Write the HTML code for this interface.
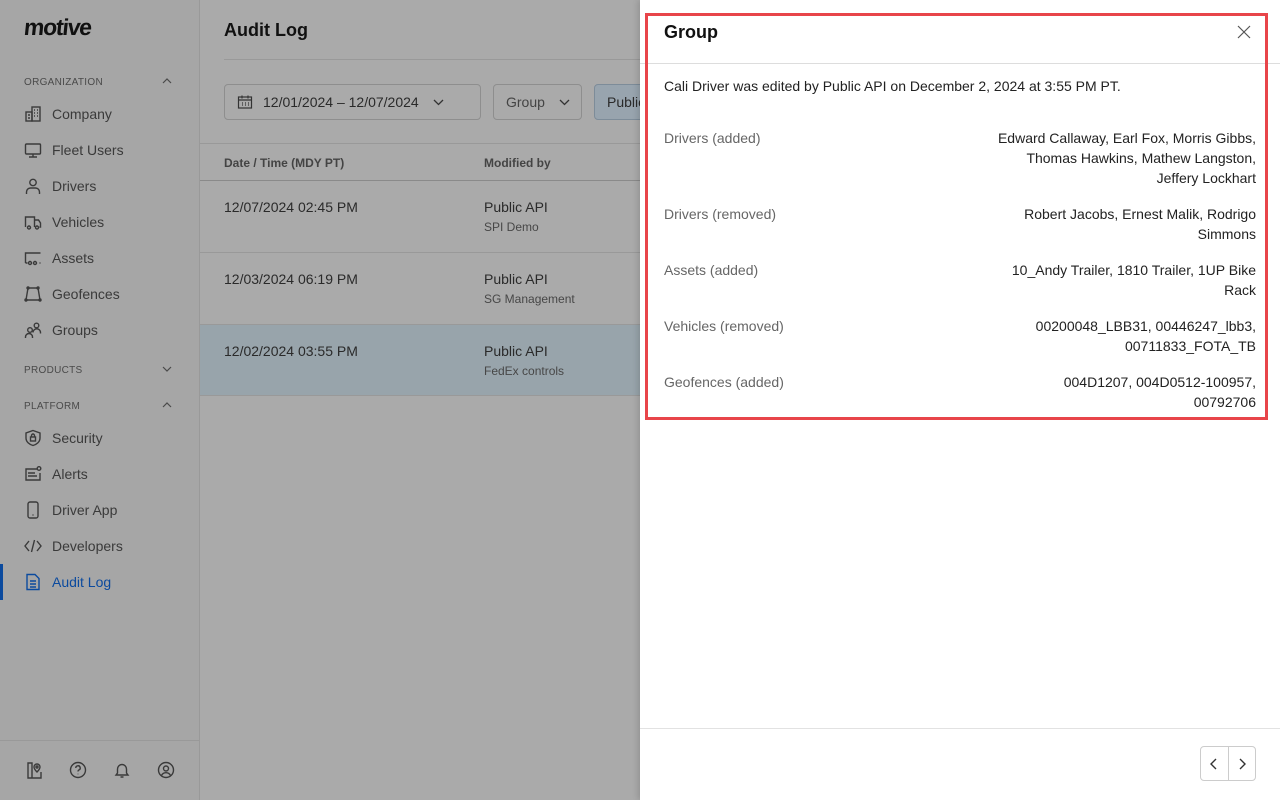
<!DOCTYPE html>
<html><head><style>
*{box-sizing:border-box;margin:0;padding:0}
body{width:1280px;height:800px;overflow:hidden;font-family:"Liberation Sans",Arial,sans-serif;background:#aaa;position:relative}
.side{position:absolute;left:0;top:0;width:200px;height:800px;background:#a6a6a6;border-right:1px solid #999}
.logo{position:absolute;left:24px;top:14px;font-size:23px;font-weight:900;color:#111;letter-spacing:-1.2px;transform:skewX(-6deg)}
.sec{position:absolute;left:24px;font-size:10px;color:#4a4a4a;letter-spacing:.3px;width:150px}
.sec svg{position:absolute;right:2px;top:1px;width:10px;height:6px;fill:none;stroke:#4a4a4a;stroke-width:1.2}
.item{position:absolute;left:24px;font-size:14px;color:#3a3a3a;display:flex;align-items:center;gap:10px}
.item svg{width:18px;height:18px;fill:none;stroke:#3a3a3a;stroke-width:1.4}
.active{color:#0b4a9e}.active svg{stroke:#0b4a9e}
.bar{position:absolute;left:0;top:564px;width:3px;height:36px;background:#0b4a9e}
.bot{position:absolute;left:0;top:740px;width:199px;border-top:1px solid #999}
.bi{position:absolute;top:761px;width:18px;height:18px;fill:none;stroke:#3a3a3a;stroke-width:1.4}
.main{position:absolute;left:200px;top:0;width:440px;height:800px}
h1{position:absolute;left:24px;top:20px;font-size:18px;color:#111}
.hl{position:absolute;left:24px;right:0;top:59px;border-top:1px solid #999}
.btn{position:absolute;top:84px;height:36px;border:1px solid #8e8e8e;border-radius:4px;font-size:14px;color:#2a2a2a;display:flex;align-items:center;padding-left:12px}
.chev{width:11px;height:7px;fill:none;stroke:#333;stroke-width:1.3}
.th{position:absolute;top:143px;left:0;right:0;height:38px;border-top:1px solid #999;border-bottom:1px solid #8a8a8a;font-size:12px;font-weight:bold;color:#444}
.row{position:absolute;left:0;right:0;height:72px;border-bottom:1px solid #999;font-size:14px;color:#2a2a2a}
.row .d{position:absolute;left:24px;top:18px}
.row .m{position:absolute;left:284px;top:18px}
.row .s{position:absolute;left:284px;top:39px;font-size:12px;color:#474747}
.panel{position:absolute;left:640px;top:0;width:640px;height:800px;background:#fff;box-shadow:-2px 0 6px rgba(0,0,0,.15)}
.red{position:absolute;left:5px;top:13px;width:623px;height:407px;border:3px solid #e8454a}
.ph{position:absolute;left:24px;top:22px;font-size:18px;font-weight:bold;color:#111}
.pl{position:absolute;left:0;right:0;top:63px;border-top:1px solid #ddd}
.intro{position:absolute;left:24px;top:78px;font-size:14px;color:#222}
.k{position:absolute;left:24px;font-size:14px;color:#666}
.v{position:absolute;right:24px;font-size:14px;color:#222;text-align:right;line-height:20px}
.fl{position:absolute;left:0;right:0;top:728px;border-top:1px solid #e2e2e2}
.pg{position:absolute;left:560px;top:746px;width:56px;height:35px;border:1px solid #ccc;border-radius:4px;display:flex}
.pg div{flex:1;display:flex;align-items:center;justify-content:center}
.pg div:first-child{border-right:1px solid #ccc}
</style></head><body>
<div class="side">
<div class="logo">motive</div>
<div class="sec" style="top:77px">ORGANIZATION<svg viewBox="0 0 10 6"><path d="M1 5l4-4 4 4"/></svg></div>
<div class="item" style="top:105px"><svg viewBox="0 0 18 18"><rect x="2" y="7" width="6" height="9"/><rect x="8" y="2" width="8" height="14"/><path d="M10 5h1M13 5h1M10 8h1M13 8h1M10 11h1M13 11h1M4 10h2M4 13h2"/></svg>Company</div>
<div class="item" style="top:141px"><svg viewBox="0 0 18 18"><rect x="1.5" y="3" width="15" height="10" rx="1"/><path d="M9 13v3M5 16h8"/></svg>Fleet Users</div>
<div class="item" style="top:177px"><svg viewBox="0 0 18 18"><circle cx="9" cy="5.5" r="3.2"/><path d="M2.5 17v-2a4 4 0 0 1 4-4h5a4 4 0 0 1 4 4v2"/></svg>Drivers</div>
<div class="item" style="top:213px"><svg viewBox="0 0 18 18"><path d="M1.5 14V4h9v10M10.5 7h4l2 3v4h-1"/><circle cx="5" cy="14.5" r="1.5"/><circle cx="13" cy="14.5" r="1.5"/></svg>Vehicles</div>
<div class="item" style="top:249px"><svg viewBox="0 0 18 18"><path d="M1.5 14V4h15M1.5 14h2M16.5 14h-1"/><circle cx="6" cy="14" r="1.5"/><circle cx="11" cy="14" r="1.5"/></svg>Assets</div>
<div class="item" style="top:285px"><svg viewBox="0 0 18 18"><path d="M4 3h10l2 12H2z"/><circle cx="4" cy="3" r="1"/><circle cx="14" cy="3" r="1"/><circle cx="2" cy="15" r="1"/><circle cx="16" cy="15" r="1"/></svg>Geofences</div>
<div class="item" style="top:321px"><svg viewBox="0 0 18 18"><circle cx="6" cy="9" r="2.3"/><circle cx="12.5" cy="4.5" r="2.3"/><path d="M1.5 17v-1a3.5 3.5 0 0 1 7 0v1M9 11.5a3.5 3.5 0 0 1 7.5 0v1"/></svg>Groups</div>
<div class="sec" style="top:365px">PRODUCTS<svg viewBox="0 0 10 6"><path d="M1 1l4 4 4-4"/></svg></div>
<div class="sec" style="top:401px">PLATFORM<svg viewBox="0 0 10 6"><path d="M1 5l4-4 4 4"/></svg></div>
<div class="item" style="top:429px"><svg viewBox="0 0 18 18"><path d="M9 1.5l7 2.5v5c0 4-3.5 6.5-7 7.5-3.5-1-7-3.5-7-7.5V4z"/><rect x="6.5" y="8" width="5" height="4"/><path d="M7.5 8V6.5a1.5 1.5 0 0 1 3 0V8"/></svg>Security</div>
<div class="item" style="top:465px"><svg viewBox="0 0 18 18"><path d="M13 4H2v11h14V8"/><circle cx="15" cy="3.5" r="1.8"/><path d="M4 8h7M4 11h9"/></svg>Alerts</div>
<div class="item" style="top:501px"><svg viewBox="0 0 18 18"><rect x="4" y="1" width="10" height="16" rx="2"/><path d="M8.5 14h1"/></svg>Driver App</div>
<div class="item" style="top:537px"><svg viewBox="0 0 18 18"><path d="M5 4L1 9l4 5M13 4l4 5-4 5M10.5 3l-3 12"/></svg>Developers</div>
<div class="item active" style="top:573px"><svg viewBox="0 0 18 18"><path d="M3 1.5h8l4 4v11H3z"/><path d="M6 8h6M6 11h6M6 14h6"/></svg>Audit Log</div>
<div class="bar"></div>
<div class="bot"></div>
<svg class="bi" style="left:25px" viewBox="0 0 18 18"><path d="M3 2h4v15H3zM7 17h9v-6"/><path d="M12 11s-3-3-3-5a3 3 0 0 1 6 0c0 2-3 5-3 5z"/><circle cx="12" cy="6" r="1"/></svg>
<svg class="bi" style="left:69px" viewBox="0 0 18 18"><circle cx="9" cy="9" r="7.5"/><path d="M6.8 7a2.2 2.2 0 1 1 3 2c-.6.3-.8.7-.8 1.5M9 12.8v.4"/></svg>
<svg class="bi" style="left:113px" viewBox="0 0 18 18"><path d="M3 14h12l-1.5-2V8a4.5 4.5 0 0 0-9 0v4zM7.5 16h3"/></svg>
<svg class="bi" style="left:157px" viewBox="0 0 18 18"><circle cx="9" cy="9" r="7.5"/><circle cx="9" cy="7.5" r="2.5"/><path d="M4.5 14.5a5 5 0 0 1 9 0"/></svg>
</div>
<div class="main">
<h1>Audit Log</h1><div class="hl"></div>
<div class="btn" style="left:24px;width:257px"><svg width="16" height="16" viewBox="0 0 16 16" fill="none" stroke="#333" stroke-width="1.2"><rect x="1.5" y="3" width="13" height="11"/><path d="M1.5 6h13M5 1.5v3M11 1.5v3M5 9h1M8 9h1M11 9h1M5 11h1M8 11h1M11 11h1"/></svg><span style="margin-left:10px">12/01/2024 – 12/07/2024</span><svg class="chev" style="margin-left:14px" viewBox="0 0 11 7"><path d="M1 1l4.5 4.5L10 1"/></svg></div>
<div class="btn" style="left:293px;width:89px;color:#444">Group<svg class="chev" style="margin-left:14px" viewBox="0 0 11 7"><path d="M1 1l4.5 4.5L10 1"/></svg></div>
<div class="btn" style="left:394px;width:80px;background:#98a4ae;border-color:#7d8c99">Public</div>
<div class="th"><span style="position:absolute;left:24px;top:12px">Date / Time (MDY PT)</span><span style="position:absolute;left:284px;top:12px">Modified by</span></div>
<div class="row" style="top:181px"><div class="d">12/07/2024 02:45 PM</div><div class="m">Public API</div><div class="s">SPI Demo</div></div>
<div class="row" style="top:253px"><div class="d">12/03/2024 06:19 PM</div><div class="m">Public API</div><div class="s">SG Management</div></div>
<div class="row" style="top:325px;background:#98a4ab;height:71px"><div class="d">12/02/2024 03:55 PM</div><div class="m">Public API</div><div class="s">FedEx controls</div></div>
</div>
<div class="panel">
<div class="ph">Group</div>
<svg style="position:absolute;left:597px;top:25px" width="14" height="14" viewBox="0 0 14 14" stroke="#555" stroke-width="1.2"><path d="M1 1l12 12M13 1L1 13"/></svg>
<div class="pl"></div>
<div class="intro">Cali Driver was edited by Public API on December 2, 2024 at 3:55 PM PT.</div>
<div class="k" style="top:130px">Drivers (added)</div><div class="v" style="top:128px">Edward Callaway, Earl Fox, Morris Gibbs,<br>Thomas Hawkins, Mathew Langston,<br>Jeffery Lockhart</div>
<div class="k" style="top:206px">Drivers (removed)</div><div class="v" style="top:204px">Robert Jacobs, Ernest Malik, Rodrigo<br>Simmons</div>
<div class="k" style="top:262px">Assets (added)</div><div class="v" style="top:260px">10_Andy Trailer, 1810 Trailer, 1UP Bike<br>Rack</div>
<div class="k" style="top:318px">Vehicles (removed)</div><div class="v" style="top:316px">00200048_LBB31, 00446247_lbb3,<br>00711833_FOTA_TB</div>
<div class="k" style="top:374px">Geofences (added)</div><div class="v" style="top:372px">004D1207, 004D0512-100957,<br>00792706</div>
<div class="red"></div>
<div class="fl"></div>
<div class="pg"><div><svg width="10" height="12" viewBox="0 0 10 12" fill="none" stroke="#333" stroke-width="1.4"><path d="M7 1L2 6l5 5"/></svg></div><div><svg width="10" height="12" viewBox="0 0 10 12" fill="none" stroke="#333" stroke-width="1.4"><path d="M3 1l5 5-5 5"/></svg></div></div>
</div>
</body></html>
